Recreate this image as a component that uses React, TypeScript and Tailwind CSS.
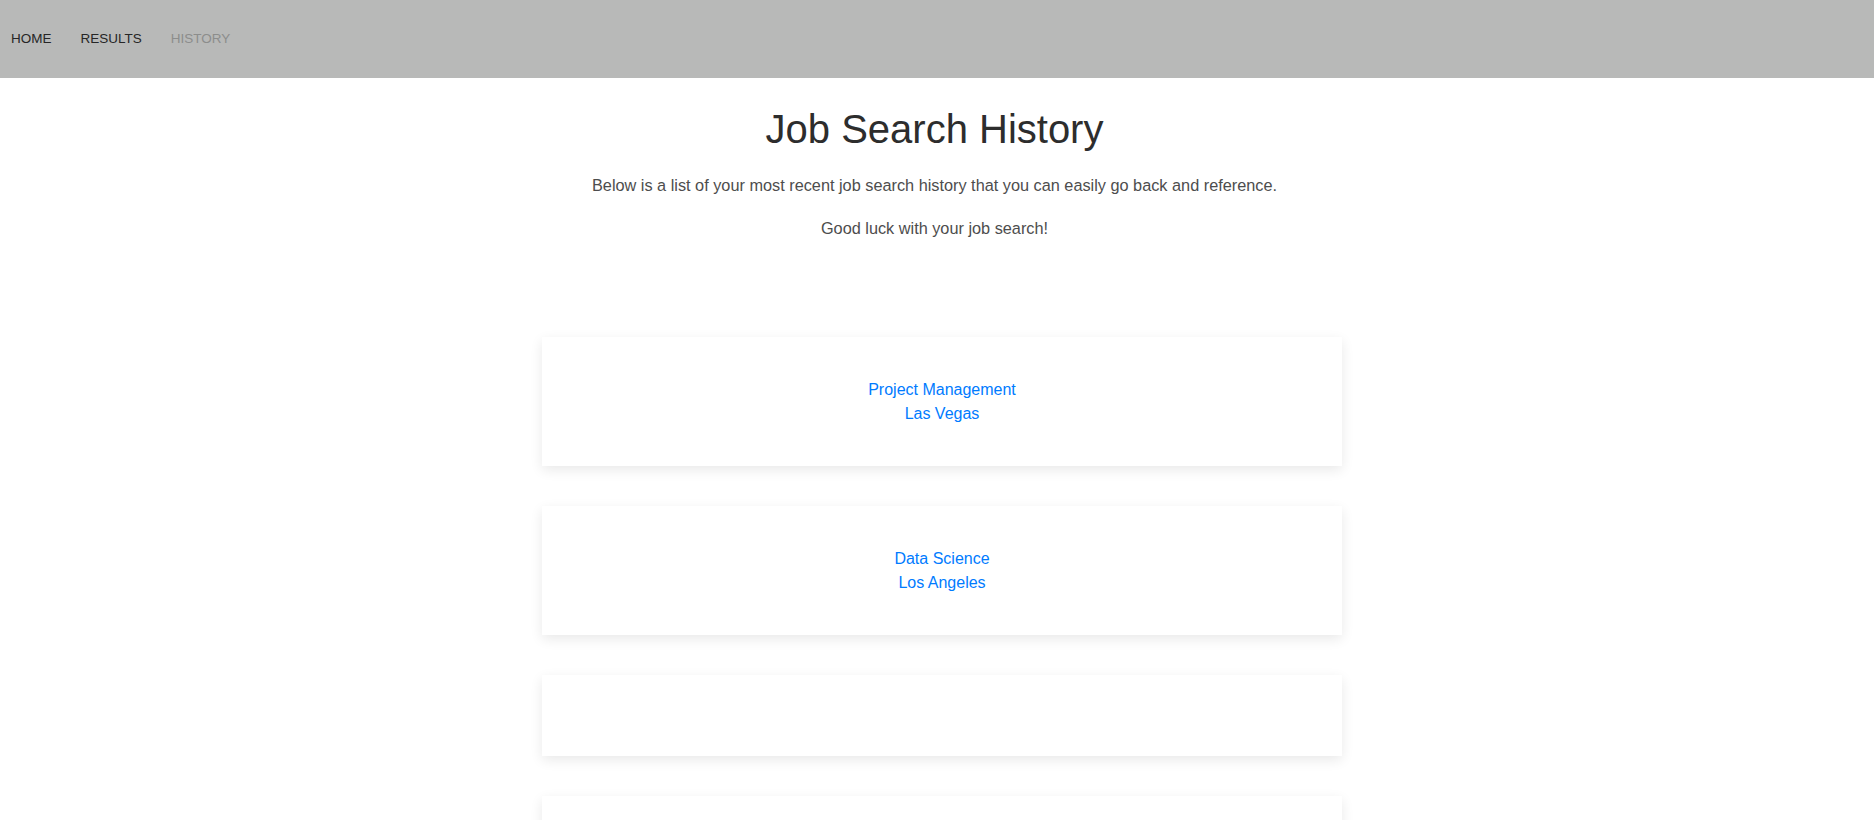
const searches = [
  { keyword: "Project Management", location: "Las Vegas" },
  { keyword: "Data Science", location: "Los Angeles" },
  null,
  null,
];

const navLinks = [
  { label: "HOME", active: false },
  { label: "RESULTS", active: false },
  { label: "HISTORY", active: true },
];

export default function App() {
  return (
    <div className="min-h-screen bg-white font-['Liberation_Sans',Arial,sans-serif]">
      <nav className="flex h-[78px] items-center gap-[29px] bg-[#b8b9b8] pl-[11px]">
        {navLinks.map((l) => (
          <a
            key={l.label}
            href="#"
            className={
              l.active
                ? "text-[13.5px] text-[#8c8d8c]"
                : "text-[13.5px] text-[#262626]"
            }
          >
            {l.label}
          </a>
        ))}
      </nav>

      <header className="pt-[27px] pr-[5px] text-center">
        <h1 className="text-[40px] leading-[48px] font-normal text-[#2d2d2d]">
          Job Search History
        </h1>
        <p className="mt-[20px] text-[16.3px] leading-[24px] text-[#4d4d4d]">
          Below is a list of your most recent job search history that you can
          easily go back and reference.
        </p>
        <p className="mt-[19px] text-[16.3px] leading-[24px] text-[#4d4d4d]">
          Good luck with your job search!
        </p>
      </header>

      <div className="mt-[97px] flex flex-col items-center gap-10 pl-[10px] pb-10">
        {searches.map((s, i) => (
          <div
            key={i}
            className="w-[800px] bg-white pt-[41px] pb-10 text-center shadow-[0_4px_12px_rgba(0,0,0,0.09)]"
          >
            {s && (
              <a href="#" className="block text-[16px] leading-[24px] text-[#007bff]">
                {s.keyword}
                <br />
                {s.location}
              </a>
            )}
          </div>
        ))}
      </div>
    </div>
  );
}
